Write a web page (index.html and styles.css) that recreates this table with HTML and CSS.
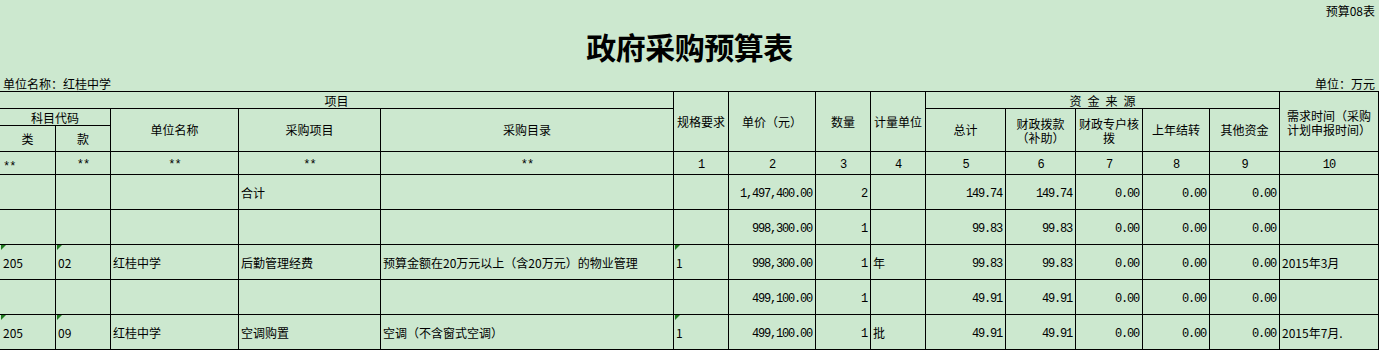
FILE: index.html
```html
<!DOCTYPE html>
<html lang="zh-CN">
<head>
<meta charset="utf-8">
<title>政府采购预算表</title>
<link rel="stylesheet" href="styles.css">
</head>
<body>
<div class="page">
  <div class="top">预算08表</div>
  <h1 class="title">政府采购预算表</h1>
  <div class="info"><span>单位名称：红桂中学</span><span>单位：万元</span></div>
  <div class="sheet">
    <div class="c h cs5 hb">项目</div>
    <div class="c h rs3">规格要求</div>
    <div class="c h rs3">单价（元）</div>
    <div class="c h rs3">数量</div>
    <div class="c h rs3">计量单位</div>
    <div class="c h cs5 hb"><span class="spaced">资金来源</span></div>
    <div class="c h rs3 two">需求时间（采购<br>计划申报时间）</div>
    <div class="c h cs2 hb">科目代码</div>
    <div class="c h rs2">单位名称</div>
    <div class="c h rs2">采购项目</div>
    <div class="c h rs2">采购目录</div>
    <div class="c h rs2">总计</div>
    <div class="c h rs2 two">财政拨款<br>（补助）</div>
    <div class="c h rs2 two">财政专户核<br>拨</div>
    <div class="c h rs2">上年结转</div>
    <div class="c h rs2">其他资金</div>
    <div class="c h">类</div>
    <div class="c h">款</div>

    <div class="c m mb">**</div>
    <div class="c m">**</div>
    <div class="c m">**</div>
    <div class="c m">**</div>
    <div class="c m">**</div>
    <div class="c m">1</div>
    <div class="c m">2</div>
    <div class="c m">3</div>
    <div class="c m">4</div>
    <div class="c m">5</div>
    <div class="c m">6</div>
    <div class="c m">7</div>
    <div class="c m">8</div>
    <div class="c m">9</div>
    <div class="c m">10</div>

    <div class="c d"></div>
    <div class="c d"></div>
    <div class="c d"></div>
    <div class="c d">合计</div>
    <div class="c d"></div>
    <div class="c d"></div>
    <div class="c d n">1,497,400.00</div>
    <div class="c d n">2</div>
    <div class="c d"></div>
    <div class="c d n">149.74</div>
    <div class="c d n">149.74</div>
    <div class="c d n">0.00</div>
    <div class="c d n">0.00</div>
    <div class="c d n">0.00</div>
    <div class="c d"></div>

    <div class="c d"></div>
    <div class="c d"></div>
    <div class="c d"></div>
    <div class="c d"></div>
    <div class="c d"></div>
    <div class="c d"></div>
    <div class="c d n">998,300.00</div>
    <div class="c d n">1</div>
    <div class="c d"></div>
    <div class="c d n">99.83</div>
    <div class="c d n">99.83</div>
    <div class="c d n">0.00</div>
    <div class="c d n">0.00</div>
    <div class="c d n">0.00</div>
    <div class="c d"></div>

    <div class="c d tri">205</div>
    <div class="c d tri">02</div>
    <div class="c d">红桂中学</div>
    <div class="c d">后勤管理经费</div>
    <div class="c d">预算金额在20万元以上（含20万元）的物业管理</div>
    <div class="c d tri">1</div>
    <div class="c d n">998,300.00</div>
    <div class="c d n">1</div>
    <div class="c d">年</div>
    <div class="c d n">99.83</div>
    <div class="c d n">99.83</div>
    <div class="c d n">0.00</div>
    <div class="c d n">0.00</div>
    <div class="c d n">0.00</div>
    <div class="c d">2015年3月</div>

    <div class="c d"></div>
    <div class="c d"></div>
    <div class="c d"></div>
    <div class="c d"></div>
    <div class="c d"></div>
    <div class="c d"></div>
    <div class="c d n">499,100.00</div>
    <div class="c d n">1</div>
    <div class="c d"></div>
    <div class="c d n">49.91</div>
    <div class="c d n">49.91</div>
    <div class="c d n">0.00</div>
    <div class="c d n">0.00</div>
    <div class="c d n">0.00</div>
    <div class="c d"></div>

    <div class="c d tri">205</div>
    <div class="c d tri">09</div>
    <div class="c d">红桂中学</div>
    <div class="c d">空调购置</div>
    <div class="c d">空调（不含窗式空调）</div>
    <div class="c d tri">1</div>
    <div class="c d n">499,100.00</div>
    <div class="c d n">1</div>
    <div class="c d">批</div>
    <div class="c d n">49.91</div>
    <div class="c d n">49.91</div>
    <div class="c d n">0.00</div>
    <div class="c d n">0.00</div>
    <div class="c d n">0.00</div>
    <div class="c d">2015年7月.</div>
  </div>
</div>
</body>
</html>
```

FILE: styles.css
```css
html, body {
  margin: 0;
  padding: 0;
  background: #cce8cf;
}
body {
  width: 1379px;
  height: 350px;
  overflow: hidden;
  font-family: "Noto Sans CJK SC", "Liberation Sans", sans-serif;
  font-size: 12px;
  color: #000;
}
.page {
  display: flex;
  flex-direction: column;
}
.top {
  height: 22px;
  line-height: 22px;
  text-align: right;
  padding-right: 4px;
}
.title {
  margin: 0;
  height: 49px;
  line-height: 49px;
  text-align: center;
  font-size: 30px;
  font-weight: 700;
  letter-spacing: -0.5px;
}
.info {
  height: 20px;
  display: flex;
  justify-content: space-between;
  align-items: flex-end;
  line-height: 14px;
  padding: 0 4px 0 3px;
}
.sheet {
  display: grid;
  grid-template-columns: 55px 54px 127px 141px 292px 54px 86px 54px 54px 79px 69px 66px 66px 69px 98px;
  grid-template-rows: 16px 16px 25px 22px repeat(5, 34px);
  gap: 1px;
  padding: 1px 1px 1px 0;
  background: #000;
  width: 1378px;
}
.c {
  background: #cce8cf;
  display: flex;
  align-items: center;
  line-height: 14px;
  white-space: nowrap;
  overflow: hidden;
  position: relative;
  min-width: 0;
}
.h {
  justify-content: center;
  text-align: center;
}
.two {
  line-height: 14px;
  padding-top: 2px;
}
.hb {
  align-items: flex-end;
}
.cs2 { grid-column: span 2; }
.cs5 { grid-column: span 5; }
.rs2 { grid-row: span 2; }
.rs3 { grid-row: span 3; }
.spaced {
  letter-spacing: 6px;
  padding-left: 6px;
}
.m {
  justify-content: center;
  font-family: "Liberation Mono", monospace;
  letter-spacing: -1px;
  padding-top: 4px;
}
.mb {
  justify-content: flex-start;
  align-items: flex-end;
  padding-left: 3px;
  padding-bottom: 0;
}
.d {
  padding: 2px 2px 0 2px;
}
.d:nth-child(15n+4) {
  padding-left: 3px;
}
.n {
  justify-content: flex-end;
  font-family: "Liberation Mono", monospace;
  letter-spacing: -1.2px;
  padding-right: 3px;
  padding-top: 3px;
}
.tri::before {
  content: "";
  position: absolute;
  top: 0;
  left: 1px;
  width: 0;
  height: 0;
  border-top: 5px solid #1f7a1f;
  border-right: 5px solid transparent;
}
```
